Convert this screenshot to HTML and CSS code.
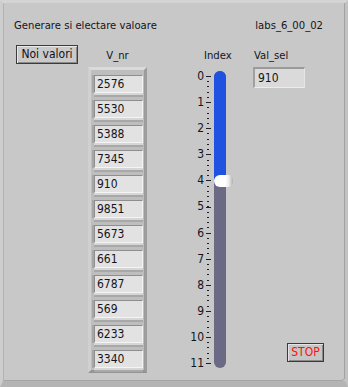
FILE: index.html
```html
<!DOCTYPE html>
<html>
<head>
<meta charset="utf-8">
<link rel="stylesheet" href="styles.css">
</head>
<body>
<div class="win">
  <div class="panel">
    <div class="head">
      <span class="title">Generare si electare valoare</span>
      <span class="vi">labs_6_00_02</span>
    </div>
    <div class="main">
      <div class="col-a"><div class="btn">Noi valori</div></div>
      <div class="col-b">
        <div class="lbl">V_nr</div>
        <div class="arr">
          <div class="cell">2576</div>
          <div class="cell">5530</div>
          <div class="cell">5388</div>
          <div class="cell">7345</div>
          <div class="cell">910</div>
          <div class="cell">9851</div>
          <div class="cell">5673</div>
          <div class="cell">661</div>
          <div class="cell">6787</div>
          <div class="cell">569</div>
          <div class="cell">6233</div>
          <div class="cell">3340</div>
        </div>
      </div>
      <div class="col-c">
        <div class="lbl lbl-index">Index</div>
        <div class="slider">
          <div class="labels">
            <div class="mk">0</div><div class="mk">1</div><div class="mk">2</div><div class="mk">3</div>
            <div class="mk">4</div><div class="mk">5</div><div class="mk">6</div><div class="mk">7</div>
            <div class="mk">8</div><div class="mk">9</div><div class="mk">10</div><div class="mk">11</div>
          </div>
          <div class="ticks"></div>
          <div class="track">
            <div class="fill"></div>
            <div class="knob"></div>
          </div>
        </div>
      </div>
      <div class="col-d">
        <div class="lbl lbl-left">Val_sel</div>
        <div class="ind">910</div>
        <div class="stop">STOP</div>
      </div>
    </div>
  </div>
</div>
</body>
</html>
```
FILE: styles.css
```css
* { box-sizing: border-box; }
html, body { margin: 0; padding: 0; background: #c8c8c8; }
body {
  font-family: "DejaVu Sans Condensed", "DejaVu Sans", sans-serif;
  font-size: 11.2px;
  color: #141420;
}
.win {
  width: 348px;
  height: 387px;
  background: #c8c8c8;
  border-top: 3px solid #d4d4d4;
  border-left: 3px solid #cdcdcd;
  border-right: 3px solid #c2c2c2;
  border-bottom: 6px solid #b4b4b4;
}
.panel {
  height: 100%;
  border-left: 1px solid #b2b2b2;
  border-right: 1px solid #a2a2a2;
  border-bottom: 1px solid #a6a6a6;
  border-bottom-right-radius: 4px;
  display: flex;
  flex-direction: column;
}
.head {
  display: flex;
  padding: 16px 21px 0 10px;
  line-height: 14px;
  height: 30px;
}
.vi { margin-left: auto; }
.main {
  display: flex;
  margin-top: 12px;
  height: 328px;
}
.col-a { margin-left: 12px; width: 62px; }
.btn {
  width: 62px;
  height: 19px;
  border: 1px solid #3c3c3c;
  background: #cacaca;
  box-shadow: inset 1px 1px 0 #e8e8e8, inset -1px -1px 0 #8a8a8a;
  font-size: 12px;
  line-height: 17px;
  text-align: center;
  color: #101018;
}
.col-b { margin-left: 10px; width: 59px; display: flex; flex-direction: column; }
.lbl { height: 22px; line-height: 22px; text-align: center; }
.arr {
  height: 306px;
  background: #bebebe;
  border-top: 3px solid #dadada;
  border-left: 3px solid #d0d0d0;
  border-right: 3px solid #9c9c9c;
  border-bottom: 3px solid #949494;
  padding: 5px 1px 0 3px;
  display: flex;
  flex-direction: column;
  gap: 7px;
}
.cell {
  height: 18px;
  width: 49px;
  background: #e2e2e2;
  border-top: 1px solid #8e8e8e;
  border-left: 1px solid #8e8e8e;
  border-bottom: 1px solid #f4f4f4;
  border-right: 1px solid #f4f4f4;
  box-shadow: 0 2px 0 #d6d6d6, 0 4px 0 #a8a8a8, -2px 0 0 #a6a6a6;
  padding-left: 2px;
  font-size: 12px;
  line-height: 16px;
}
.col-c { margin-left: 43px; width: 45px; display: flex; flex-direction: column; }
.lbl-index { text-align: left; padding-left: 14px; }
.slider { display: flex; }
.labels {
  width: 14px;
  margin-top: -4px;
  display: flex;
  flex-direction: column;
  font-size: 12px;
}
.mk { height: 26.1px; line-height: 26.1px; text-align: right; }
.ticks {
  width: 5px;
  height: 288px;
  margin-left: 2px;
  margin-top: 9px;
  background-image:
    repeating-linear-gradient(to bottom, #1e1e28 0 1px, transparent 1px 26.1px),
    repeating-linear-gradient(to bottom, #1e1e28 0 1px, transparent 1px 5.22px);
  background-size: 5px 100%, 2px 100%;
  background-position: 0 0, 1px 0;
  background-repeat: no-repeat;
}
.track {
  position: relative;
  width: 12px;
  height: 297px;
  margin-left: 3px;
  margin-top: 4px;
  background: #6a6a84;
  border-radius: 6px;
}
.fill {
  height: 112px;
  background: #2052e2;
  border-radius: 6px 6px 0 0;
}
.knob {
  position: absolute;
  left: 0;
  top: 104px;
  width: 19px;
  height: 12px;
  border-radius: 6px 5px 5px 6px;
  background: linear-gradient(to right, #ffffff 0 60%, #ececec 78%, #b0b0b0);
}
.col-d { margin-left: 18px; width: 71px; display: flex; flex-direction: column; }
.lbl-left { text-align: left; padding-left: 1px; }
.ind {
  width: 52px;
  height: 21px;
  background: #dadada;
  border-top: 2px solid #9a9a9a;
  border-left: 2px solid #a0a0a0;
  border-bottom: 1px solid #ececec;
  border-right: 1px solid #e6e6e6;
  padding-left: 3px;
  font-size: 12px;
  line-height: 18px;
}
.stop {
  margin-top: auto;
  margin-bottom: 11px;
  align-self: flex-end;
  width: 37px;
  height: 19px;
  border: 1px solid #3a3a3a;
  background: #c6c6c6;
  box-shadow: inset 1px 1px 0 #e4e4e4, inset -1px -1px 0 #8a8a8a;
  color: #ff1010;
  font-size: 12px;
  line-height: 17px;
  text-align: center;
}
```
